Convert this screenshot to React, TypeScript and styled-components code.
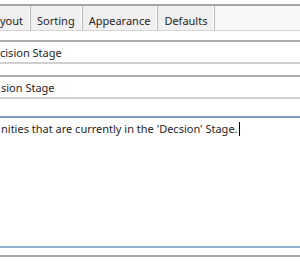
import React from "react";
import styled, { createGlobalStyle } from "styled-components";

const Global = createGlobalStyle`
  html, body { margin: 0; padding: 0; background: #ffffff; overflow: hidden; }
  body { font-family: "Noto Sans", "Segoe UI", Tahoma, sans-serif; font-size: 11px; color: #262626; }
`;

const Frame = styled.div`
  width: 300px;
  height: 261px;
  display: flex;
  flex-direction: column;
  padding-top: 4px;
  box-sizing: border-box;
  background: #ffffff;
  overflow: hidden;
`;

const TabStrip = styled.div`
  height: 27px;
  box-sizing: border-box;
  display: flex;
  align-items: stretch;
  background: #f8f8f8;
  border-top: 2px solid #a5a5a5;
  border-bottom: 1px solid #d4d4d4;
`;

const Tab = styled.div<{ $first?: boolean }>`
  display: flex;
  align-items: center;
  padding: 5px 7px 0 6px;
  margin-left: ${(p) => (p.$first ? "-6px" : "0")};
  background: #f0f0f0;
  border-right: 1px solid #b9b9b9;
  box-shadow: inset -1px 0 0 #ffffff;
  white-space: nowrap;
`;

const Form = styled.div`
  display: flex;
  flex-direction: column;
  gap: 11px;
  padding-top: 9px;
`;

const TextBox = styled.div<{ $indent?: number }>`
  height: 24px;
  box-sizing: border-box;
  display: flex;
  align-items: center;
  padding-left: ${(p) => p.$indent ?? 0}px;
  border-top: 2px solid #ababab;
  border-bottom: 2px solid #d0d0d0;
  white-space: nowrap;
  overflow: hidden;
`;

const TextArea = styled.div`
  height: 132px;
  box-sizing: border-box;
  padding: 3px 0 0 1px;
  border-top: 2px solid #7a9cc0;
  border-bottom: 2px solid #8fb0cf;
  margin-top: 6px;
  white-space: nowrap;
  overflow: hidden;
`;

const Caret = styled.span`
  display: inline-block;
  width: 1px;
  height: 14px;
  background: #000;
  vertical-align: -3px;
  margin-left: 1px;
`;

const BottomEdge = styled.div`
  margin-top: 7px;
  border-top: 2px solid #a5a5a5;
`;

export default function App() {
  return (
    <>
      <Global />
      <Frame>
        <TabStrip>
          <Tab $first>yout</Tab>
          <Tab>Sorting</Tab>
          <Tab>Appearance</Tab>
          <Tab>Defaults</Tab>
        </TabStrip>
        <Form>
          <TextBox $indent={0}>cision Stage</TextBox>
          <TextBox $indent={1}>sion Stage</TextBox>
          <TextArea>
            nities that are currently in the 'Decsion' Stage.
            <Caret />
          </TextArea>
        </Form>
        <BottomEdge />
      </Frame>
    </>
  );
}
